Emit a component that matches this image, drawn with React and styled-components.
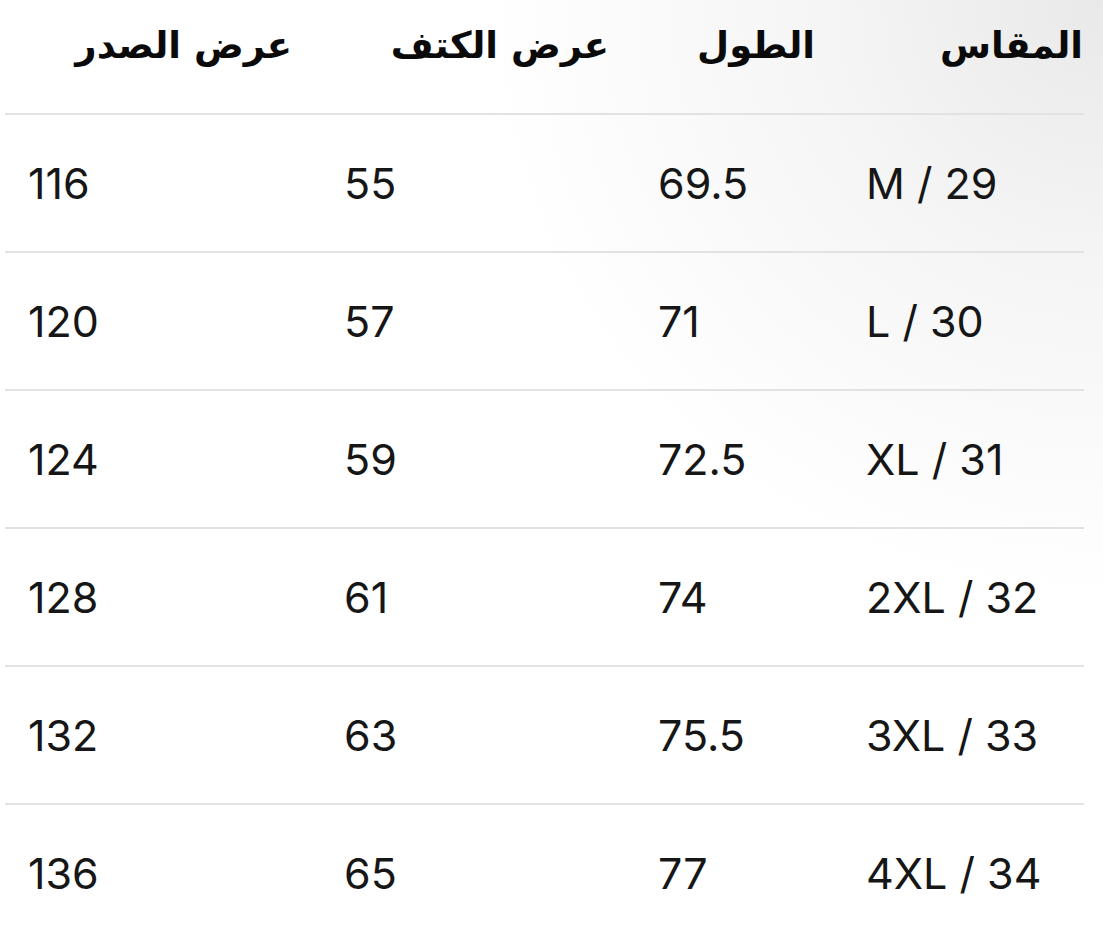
import React from 'react'
import styled, { createGlobalStyle } from 'styled-components'

const GlobalStyle = createGlobalStyle`
    html, body {
        margin: 0;
        padding: 0;
        background: #ffffff;
    }
    body {
        font-family: Inter, 'Liberation Sans', sans-serif;
        color: #111111;
    }
`

const Page = styled.div`
    width: 1103px;
    height: 950px;
    overflow: hidden;
    background: radial-gradient(ellipse 620px 600px at 1103px 0px, #e9e9e9 0%, #f5f5f5 45%, #ffffff 100%);
`

const Table = styled.div`
    direction: rtl;
    width: 1079px;
    margin-left: 5px;
`

const Row = styled.div`
    display: grid;
    grid-template-columns: 241px 208px 314px 316px;
    height: ${props => (props.header ? '113px' : '136px')};
    align-items: ${props => (props.header ? 'start' : 'center')};
    border-bottom: ${props => (props.last ? 'none' : '2px solid #e2e2e2')};
`

const HeadCell = styled.div`
    font-family: 'DejaVu Sans', 'Noto Sans', sans-serif;
    font-weight: 700;
    font-size: 37px;
    line-height: 44px;
    padding-top: 24px;
    padding-right: ${props => props.pad}px;
    text-align: right;
    color: #0a0a0a;
`

const Cell = styled.div`
    direction: ltr;
    text-align: left;
    font-family: Inter, 'Liberation Sans', sans-serif;
    font-size: 43px;
    line-height: 50px;
    padding-left: 23px;
    color: #161616;
`

const headers = [
    { label: 'المقاس', pad: 1 },
    { label: 'الطول', pad: 28 },
    { label: 'عرض الكتف', pad: 26 },
    { label: 'عرض الصدر', pad: 29 },
]

const rows = [
    ['M / 29', '69.5', '55', '116'],
    ['L / 30', '71', '57', '120'],
    ['XL / 31', '72.5', '59', '124'],
    ['2XL / 32', '74', '61', '128'],
    ['3XL / 33', '75.5', '63', '132'],
    ['4XL / 34', '77', '65', '136'],
]

function App() {
    return (
        <Page>
            <GlobalStyle />
            <Table>
                <Row header>
                    {headers.map(h => (
                        <HeadCell key={h.label} pad={h.pad}>{h.label}</HeadCell>
                    ))}
                </Row>
                {rows.map((r, i) => (
                    <Row key={r[0]} last={i === rows.length - 1}>
                        {r.map((v, j) => (
                            <Cell key={j}>{v}</Cell>
                        ))}
                    </Row>
                ))}
            </Table>
        </Page>
    )
}

export default App
